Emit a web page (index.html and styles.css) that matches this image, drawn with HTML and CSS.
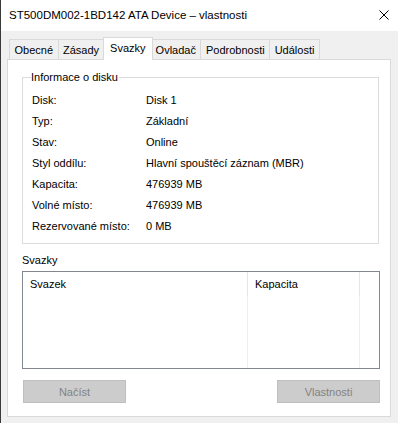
FILE: index.html
```html
<!DOCTYPE html>
<html lang="cs">
<head>
    <meta charset="UTF-8">
    <meta name="viewport" content="width=device-width, initial-scale=1.0">
    <title>ST500DM002-1BD142 ATA Device – vlastnosti</title>
    <link rel="stylesheet" href="styles.css">
</head>
<body>
    <div class="window">
        <header class="titlebar">
            <span class="title">ST500DM002-1BD142 ATA Device – vlastnosti</span>
            <svg class="close" width="10" height="10" viewBox="0 0 10 10">
                <path d="M0.5 0.5 L9.5 9.5 M9.5 0.5 L0.5 9.5" stroke="#000" stroke-width="1" fill="none"/>
            </svg>
        </header>
        <main class="content">
            <ul class="tabs">
                <li>Obecné</li>
                <li>Zásady</li>
                <li class="active">Svazky</li>
                <li>Ovladač</li>
                <li>Podrobnosti</li>
                <li>Události</li>
            </ul>
            <div class="panel">
                <fieldset class="group">
                    <legend>Informace o disku</legend>
                    <dl class="info">
                        <dt>Disk:</dt><dd>Disk 1</dd>
                        <dt>Typ:</dt><dd>Základní</dd>
                        <dt>Stav:</dt><dd>Online</dd>
                        <dt>Styl oddílu:</dt><dd>Hlavní spouštěcí záznam (MBR)</dd>
                        <dt>Kapacita:</dt><dd>476939 MB</dd>
                        <dt>Volné místo:</dt><dd>476939 MB</dd>
                        <dt>Rezervované místo:</dt><dd>0 MB</dd>
                    </dl>
                </fieldset>
                <div class="section-label">Svazky</div>
                <div class="listview">
                    <div class="lv-head">Svazek</div>
                    <div class="lv-head">Kapacita</div>
                    <div class="lv-head lv-last"></div>
                    <div class="lv-col"></div>
                    <div class="lv-col"></div>
                    <div class="lv-col lv-last"></div>
                </div>
                <div class="buttons">
                    <button type="button" disabled>Načíst</button>
                    <button type="button" disabled>Vlastnosti</button>
                </div>
            </div>
        </main>
    </div>
</body>
</html>
```

FILE: styles.css
```css
html, body {
    margin: 0;
    padding: 0;
    height: 100%;
}
body {
    font-family: "Liberation Sans", Arial, sans-serif;
    font-size: 11px;
    color: #000;
    background-color: #f0f0f0;
}
.window {
    height: 423px;
    border-left: 1px solid #3a3a3a;
    box-sizing: border-box;
    background-color: #f0f0f0;
}
.titlebar {
    height: 31px;
    background-color: #fff;
    display: flex;
    align-items: center;
    justify-content: space-between;
    padding: 0 9px 1px 8px;
    box-sizing: border-box;
}
.title {
    font-size: 11.5px;
}
.content {
    padding: 8px 7px 0 6px;
}
.tabs {
    list-style: none;
    margin: 0 0 0 2px;
    padding: 0;
    display: flex;
    height: 20px;
    position: relative;
    z-index: 1;
}
.tabs li {
    height: 20px;
    line-height: 21px;
    padding: 0 4.5px;
    box-sizing: border-box;
    border: 1px solid #d9d9d9;
    border-bottom: none;
    border-left: none;
    background-color: #f0f0f0;
}
.tabs li:first-child {
    border-left: 1px solid #d9d9d9;
}
.tabs li.active {
    background-color: #fff;
    height: 23px;
    margin: -2px -2px 0 -2px;
    padding: 0 6.5px;
    line-height: 20px;
    border-left: 1px solid #d9d9d9;
    position: relative;
    z-index: 2;
}
.panel {
    background-color: #fff;
    border: 1px solid #d9d9d9;
    height: 358px;
    box-sizing: border-box;
    padding: 0 10px 0 14px;
}
.group {
    margin: 11px 1px 0 0;
    padding: 5px 0 2px 9px;
    border: 1px solid #dcdcdc;
    height: 173px;
    box-sizing: border-box;
}
.group legend {
    padding: 0 1px 0 0;
    margin-left: -1px;
    line-height: 13px;
}
.info {
    margin: 0;
    display: grid;
    grid-template-columns: 114px 1fr;
    grid-auto-rows: 21px;
    align-items: center;
}
.info dt, .info dd {
    margin: 0;
}
.section-label {
    margin-top: 9px;
    line-height: 14px;
    margin-bottom: 4px;
}
.listview {
    border: 1px solid #828790;
    height: 98px;
    box-sizing: border-box;
    display: grid;
    grid-template-columns: 225px 112px 1fr;
    grid-template-rows: 24px 1fr;
}
.lv-head {
    padding: 5px 0 0 7px;
    line-height: 14px;
    border-right: 1px solid #e5e5e5;
}
.lv-col {
    border-right: 1px solid #eaf0f8;
}
.lv-last {
    border-right: none;
}
.buttons {
    display: flex;
    justify-content: space-between;
    margin-top: 11px;
    padding-left: 1px;
}
button {
    width: 103px;
    height: 23px;
    font-family: inherit;
    font-size: 11px;
    background-color: #cccccc;
    border: 1px solid #bfbfbf;
    color: #838383;
    padding: 0;
}
```
